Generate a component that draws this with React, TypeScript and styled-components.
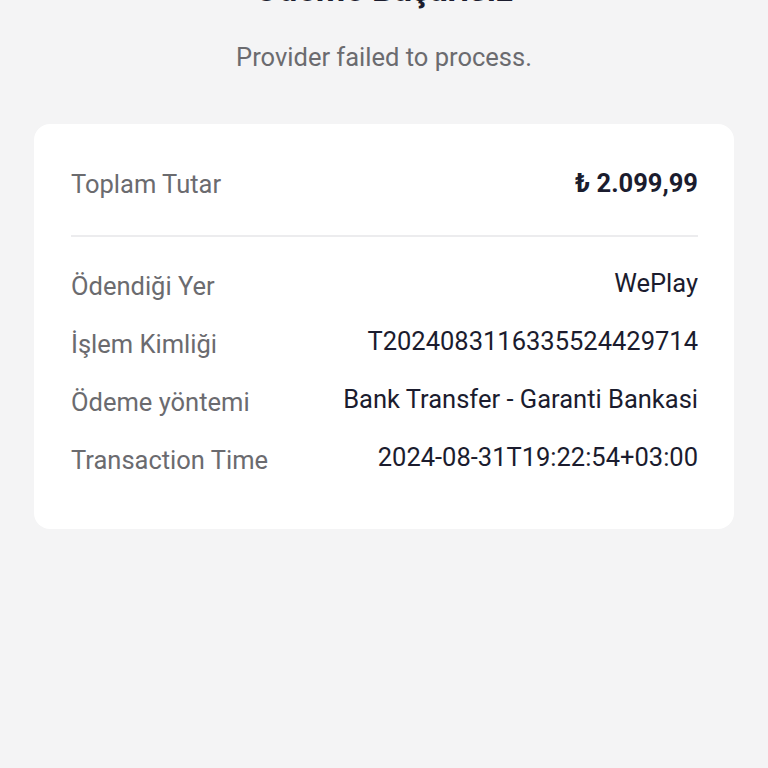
import styled, { createGlobalStyle } from 'styled-components';

const GlobalStyle = createGlobalStyle`
	html, body {
		margin: 0;
		padding: 0;
		background: #f4f4f5;
		font-family: Roboto, "Noto Sans", sans-serif;
	}
`;

type Row = { label: string; value: string };

const rows: Row[] = [
	{ label: 'Ödendiği Yer', value: 'WePlay' },
	{ label: 'İşlem Kimliği', value: 'T2024083116335524429714' },
	{ label: 'Ödeme yöntemi', value: 'Bank Transfer - Garanti Bankasi' },
	{ label: 'Transaction Time', value: '2024-08-31T19:22:54+03:00' },
];

const App = () => {
	return (
		<>
			<GlobalStyle />
			<Page>
				<Header>
					<Title>Ödeme Başarısız</Title>
					<Subtitle>Provider failed to process.</Subtitle>
				</Header>
				<Card>
					<TotalRow>
						<Label>Toplam Tutar</Label>
						<Amount>₺ 2.099,99</Amount>
					</TotalRow>
					<Divider />
					<Details>
						{rows.map((row) => (
							<DetailRow key={row.label}>
								<Label>{row.label}</Label>
								<Value>{row.value}</Value>
							</DetailRow>
						))}
					</Details>
				</Card>
			</Page>
		</>
	);
};

export default App;

const Page = styled.div`
	width: 768px;
	height: 768px;
	overflow: hidden;
	box-sizing: border-box;
	padding: 0 34px;
	display: flex;
	flex-direction: column;
`;

const Header = styled.header`
	display: flex;
	flex-direction: column;
	align-items: center;
	margin-top: -31px;
`;

const Title = styled.h1`
	margin: 0;
	font-size: 34px;
	line-height: 40px;
	font-weight: 700;
	color: #1b1c2e;
`;

const Subtitle = styled.p`
	margin: 33px 0 0;
	font-size: 25.5px;
	line-height: 30px;
	color: #6b6b6f;
`;

const Card = styled.section`
	margin-top: 52px;
	background: #ffffff;
	border-radius: 16px;
	padding: 42px 36px 54px 37px;
	display: flex;
	flex-direction: column;
`;

const TotalRow = styled.div`
	display: flex;
	justify-content: space-between;
	align-items: center;
`;

const Divider = styled.hr`
	border: none;
	height: 2px;
	background: #ececee;
	margin: 36px 0 31px;
`;

const Details = styled.div`
	display: flex;
	flex-direction: column;
	gap: 25px;
`;

const DetailRow = styled.div`
	display: flex;
	justify-content: space-between;
	align-items: flex-start;
	gap: 16px;
`;

const Label = styled.span`
	font-size: 25.5px;
	line-height: 30px;
	color: #6b6b6f;
	padding-top: 3px;
`;

const Value = styled.span`
	font-size: 25.5px;
	line-height: 30px;
	color: #1b1c2e;
	text-align: right;
`;

const Amount = styled(Value)`
	font-weight: 700;
`;
